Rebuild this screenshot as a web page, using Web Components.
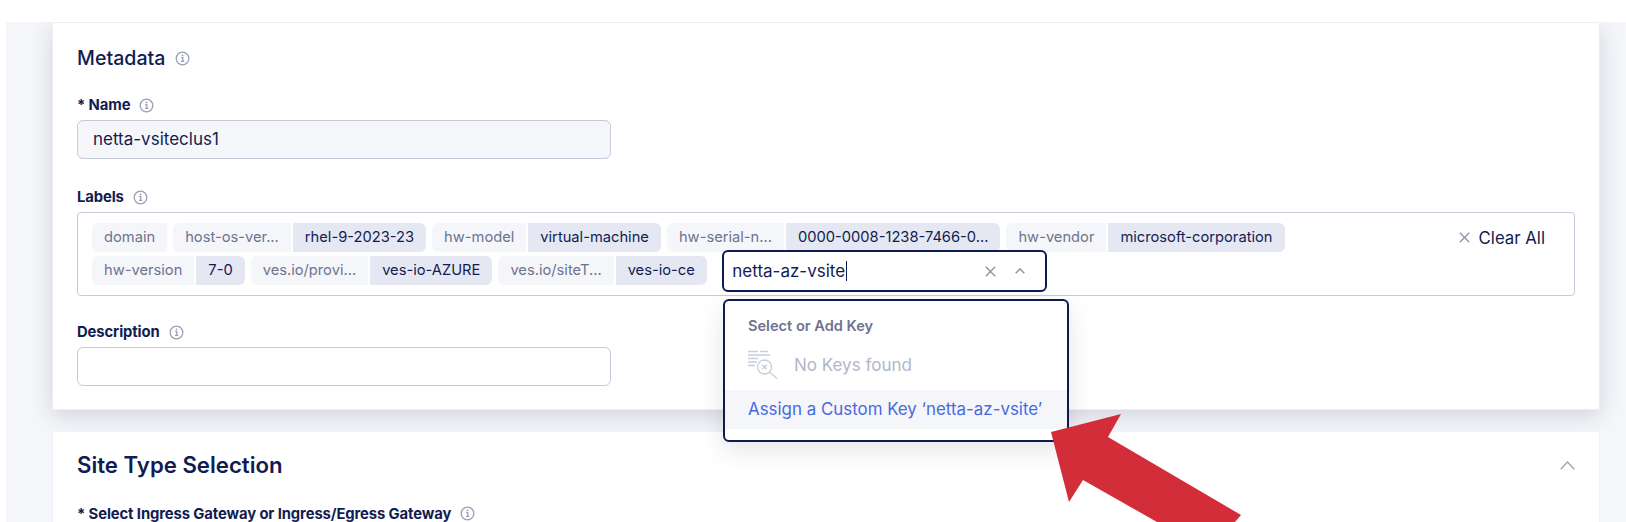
<!DOCTYPE html>
<html lang="en"><head><meta charset="utf-8"><title>Metadata</title>
<style>
html,body{margin:0;padding:0;height:522px;overflow:hidden;background:#fff}
body{font-family:Inter,"Liberation Sans",sans-serif;color:#121c52}
</style></head><body>
<form-page>
  <form-card>
    <card-title>Metadata</card-title>
    <form-field label="* Name" style="margin-top:25px"><text-box value="netta-vsiteclus1" filled></text-box></form-field>
    <form-field label="Labels" style="margin-top:29px"><label-box></label-box></form-field>
    <form-field label="Description" style="margin-top:27px"><text-box></text-box></form-field>
  </form-card>
  <site-card></site-card>
</form-page>
<red-arrow></red-arrow>
<script>
const INFO='<svg width="15" height="15" viewBox="0 0 15 15" fill="none" stroke="#9a9fb5" aria-hidden="true"><circle cx="7.5" cy="7.5" r="6.3" stroke-width="1.3"/><path d="M6.2 6.7h1.6v3.5M6 10.4h3.3" stroke-width="1.3"/><circle cx="7.5" cy="4.4" r=".95" fill="#9a9fb5" stroke="none"/></svg>';
const X=(s=11,c="#8d93ab")=>`<svg width="${s}" height="${s}" viewBox="0 0 11 11" fill="none" stroke="${c}" stroke-width="1.4" aria-hidden="true"><path d="M.8.8l9.4 9.4M10.2.8L.8 10.2"/></svg>`;
const CHEV=(w,h,c)=>`<svg width="${w}" height="${h}" viewBox="0 0 ${w} ${h}" fill="none" stroke="${c}" stroke-width="1.5" aria-hidden="true"><path d="M.7 ${h-.8}L${w/2} 1L${w-.7} ${h-.8}"/></svg>`;
function def(name,css,html){
  customElements.define(name,class extends HTMLElement{
    connectedCallback(){ if(this.shadowRoot) return;
      this.attachShadow({mode:"open"}).innerHTML=`<style>${css}</style>`+(typeof html==="function"?html(this):html);}
  });
}
def("form-page",`:host{display:block;margin-left:6px;margin-top:22px;height:500px;background:#f5f6f9;padding:0 26px 0 46px;overflow:hidden}`,`<slot></slot>`);
def("form-card",`:host{display:block;box-sizing:border-box;height:388px;background:#fff;border-radius:3px;padding:23px 24px 0 25px;box-shadow:0 0 0 1px #eceef4 inset,0 6px 22px rgba(30,40,80,.16)}`,`<slot></slot>`);
def("card-title",`:host{display:flex;align-items:center;gap:10px;font-size:19.6px;line-height:26px;font-weight:500}`,()=>`<slot></slot>${INFO}`);
def("form-field",`:host{display:block}
.l{display:flex;align-items:center;gap:9px;font-size:14.8px;font-weight:700;letter-spacing:-.1px;line-height:18px;height:18px;margin-bottom:6px}`,
 e=>`<div class="l"><span>${e.getAttribute("label")}</span>${INFO}</div><slot></slot>`);
def("text-box",`:host{display:block;box-sizing:border-box;width:534px;height:39px;border:1px solid #c6cad9;border-radius:6px;padding:0 15px;font-size:17px;line-height:37px;background:#fff}
:host([filled]){background:#f5f6f9}`,e=>e.getAttribute("value")||"");
def("kv-chip",`:host{display:inline-flex;gap:2px;height:29px;font-size:14.7px;line-height:29px}
span{padding:0 12px;background:#f5f6f9;color:#6d7390;border-radius:6px 0 0 6px}
b{font-weight:400;padding:0 12px;background:#e5e8f2;color:#121c52;border-radius:0 6px 6px 0}
span:only-child{border-radius:6px 0 0 6px}`,e=>`<span>${e.getAttribute("k")}</span>${e.hasAttribute("v")?`<b>${e.getAttribute("v")}</b>`:""}`);
def("label-box",`:host{display:flex;box-sizing:border-box;width:1498px;height:84px;border:1px solid #c6cad9;border-radius:4px;padding:10px 29px 0 14px;position:relative}
.w{flex:1;display:flex;flex-direction:column;gap:4px}
.r{display:flex;gap:6px;height:29px}
.clr{display:flex;align-items:center;gap:9px;height:29px;font-size:16.8px;color:#121c52;margin-left:auto}
.inp{box-sizing:border-box;width:325px;height:42px;margin:-6px 0 -7px 9.5px;border:2px solid #0f1a4f;border-radius:6px;background:#fff;flex:none;display:flex;align-items:center;padding:0 20px 0 8px;font-size:17px;position:relative}
.txt{flex:1;display:flex;align-items:center}
.car{display:inline-block;width:1px;height:20px;background:#0f1a4f;margin-left:1px}
.ic{display:flex;gap:19px;align-items:center}`,
()=>`<div class="w"><div class="r">
<kv-chip k="domain"></kv-chip>
<kv-chip k="host-os-ver..." v="rhel-9-2023-23"></kv-chip>
<kv-chip k="hw-model" v="virtual-machine"></kv-chip>
<kv-chip k="hw-serial-n..." v="0000-0008-1238-7466-0..."></kv-chip>
<kv-chip k="hw-vendor" v="microsoft-corporation"></kv-chip>
</div><div class="r">
<kv-chip k="hw-version" v="7-0"></kv-chip>
<kv-chip k="ves.io/provi..." v="ves-io-AZURE"></kv-chip>
<kv-chip k="ves.io/siteT..." v="ves-io-ce"></kv-chip>
<div class="inp"><span class="txt">netta-az-vsite<i class="car"></i></span><span class="ic">${X(11)}${CHEV(10,6,"#8d93ab")}</span></div>
</div></div><div class="clr">${X(11)}<span>Clear All</span></div><key-menu></key-menu>`);
def("key-menu",`:host{position:absolute;left:645px;top:86px;width:346px;height:143px;box-sizing:border-box;border:2px solid #0f1a4f;border-radius:6px;background:#fff;box-shadow:0 8px 24px rgba(30,40,80,.12);display:flex;flex-direction:column;z-index:3}
.h{padding:16px 0 0 23px;font-size:14.6px;line-height:18px;font-weight:600;color:#6d7390}
.n{display:flex;align-items:center;gap:16px;height:37px;margin-top:11px;padding-left:23px;font-size:17px;color:#b1b6c8}
.a{margin-top:auto;margin-bottom:11px;height:39px;line-height:39px;padding-left:23px;background:#f5f6f9;color:#4a68e0;font-size:16.9px;white-space:nowrap}`,
`<div class="h">Select or Add Key</div>
<div class="n"><svg width="30" height="29" viewBox="0 0 30 29" fill="none" stroke="#c9cddc" stroke-width="1.3" aria-hidden="true"><path d="M0 1.5h10M12 1.5h8M0 5h22M0 8.5h10M0 12h9M0 15.5h7"/><circle cx="16.5" cy="17" r="7"/><path d="M21.5 22l7.5 6.5"/><path d="M14.3 14.8l4.4 4.4M18.7 14.8l-4.4 4.4" stroke-width="1.5"/></svg><span>No Keys found</span></div>
<div class="a">Assign a Custom Key ‘netta-az-vsite’</div>`);
def("site-card",`:host{display:block;box-sizing:border-box;height:120px;margin-top:21px;background:#fff;border-radius:3px;padding:20px 25px 0;box-shadow:0 0 0 1px #f0f1f6 inset}
.t{display:flex;justify-content:space-between;align-items:center;font-size:22.2px;font-weight:600;line-height:28px}
.s{display:flex;align-items:center;gap:9px;margin-top:27px;font-size:14.8px;font-weight:700;letter-spacing:-.1px;line-height:14px}`,
()=>`<div class="t"><span>Site Type Selection</span>${CHEV(15,9,"#a3a8bc")}</div><div class="s"><span>* Select Ingress Gateway or Ingress/Egress Gateway</span>${INFO}</div>`);
def("red-arrow",`:host{position:absolute;left:0;top:0;width:1626px;height:522px;pointer-events:none;z-index:5;display:block}`,
`<svg width="1626" height="522" viewBox="0 0 1626 522" aria-hidden="true"><path fill="#d22d38" d="M1121 414L1051 432L1069 502L1083 480L1157 522L1235 522L1241 515L1108 437Z"/></svg>`);
</script>
</body></html>
